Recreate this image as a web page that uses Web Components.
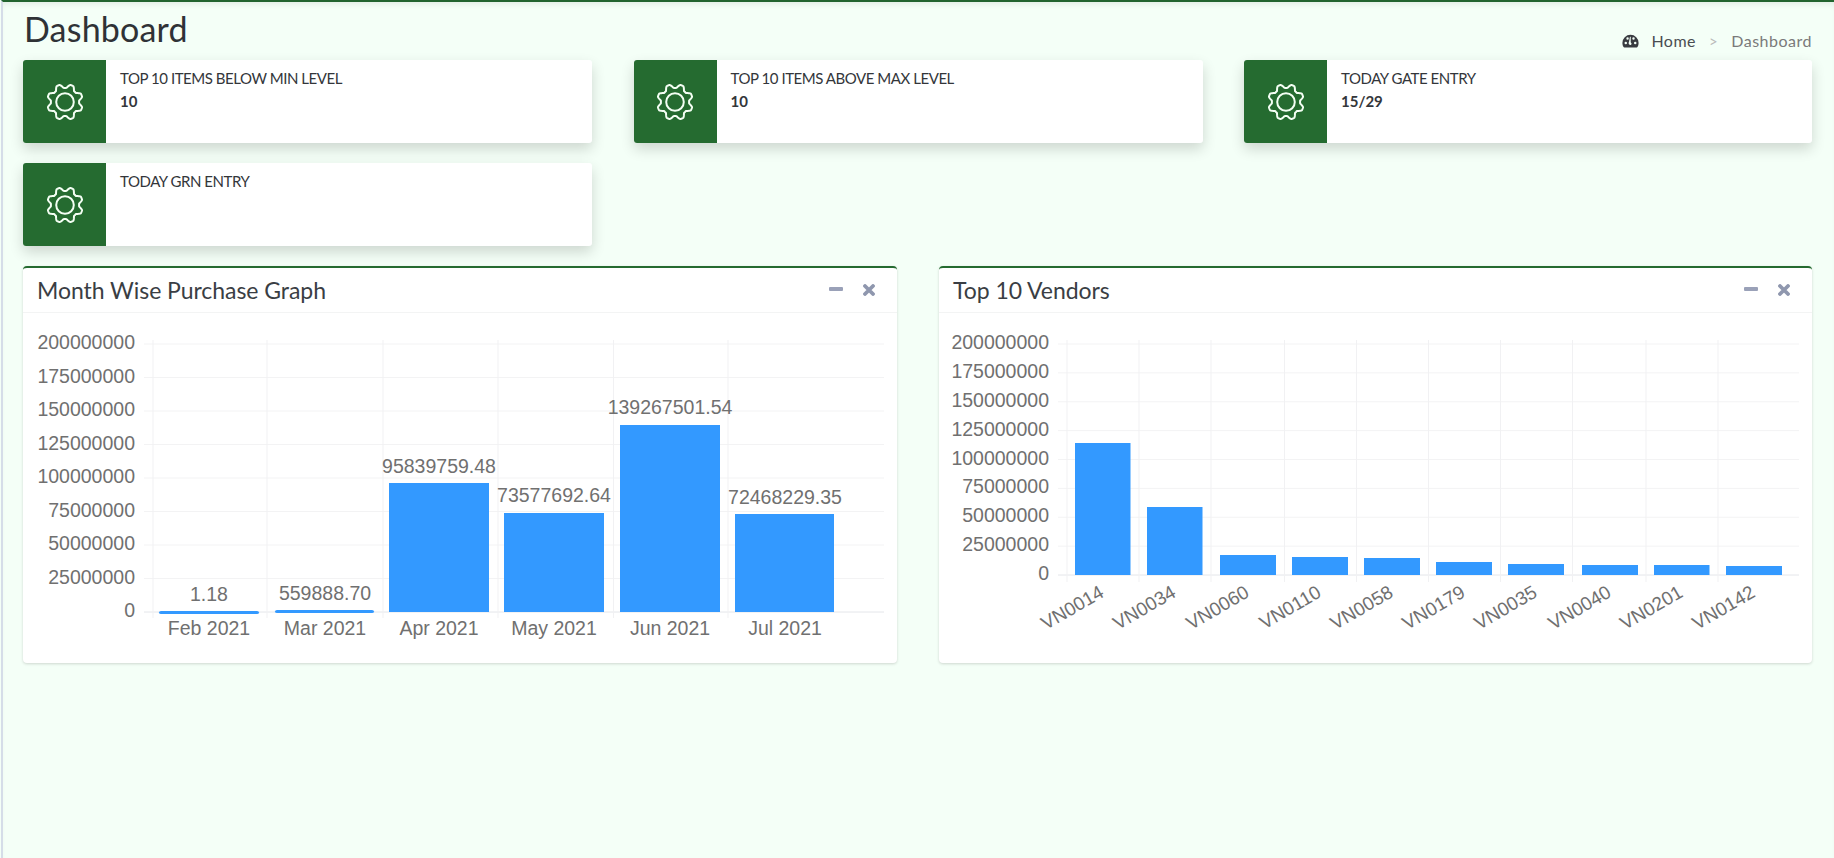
<!DOCTYPE html>
<html lang="en">
<head>
<meta charset="utf-8">
<title>Dashboard</title>
<style>
    html, body { margin: 0; height: 100%; overflow: hidden; }
    body { background: #f4fff7; font-family: "Lato", "Liberation Sans", sans-serif; }
</style>
</head>
<body>
<app-shell>
    <page-header slot="header" title="Dashboard"></page-header>
    <stat-card label="TOP 10 ITEMS BELOW MIN LEVEL" value="10"></stat-card>
    <stat-card label="TOP 10 ITEMS ABOVE MAX LEVEL" value="10"></stat-card>
    <stat-card label="TODAY GATE ENTRY" value="15/29"></stat-card>
    <stat-card label="TODAY GRN ENTRY"></stat-card>
    <chart-panel slot="panels" title="Month Wise Purchase Graph"><bar-chart config="month"></bar-chart></chart-panel>
    <chart-panel slot="panels" title="Top 10 Vendors"><bar-chart config="vendors"></bar-chart></chart-panel>
</app-shell>

<script>
// chart data, coordinates are in page pixels, the svg viewBox starts at the panel body
const CHARTS = {
    month: {
        left: 23, top: 313, width: 874, height: 350,
        labelRight: 135, tickStart: 144, axisX: 153, plotRight: 884,
        gridTop: 344, gridBottom: 612, gridEnd: 618, labelDrop: 5,
        vlines: [153, 267, 383, 498, 613.5, 728],
        bars: [
            { name: 'Feb 2021', x: 159, w: 100, top: 611, bottom: 614, r: 2, cx: 209, value: '1.18', vy: 601 },
            { name: 'Mar 2021', x: 275, w: 99, top: 610, bottom: 613, r: 2, cx: 325, value: '559888.70', vy: 600 },
            { name: 'Apr 2021', x: 389, w: 100, top: 483, cx: 439, value: '95839759.48', vy: 473 },
            { name: 'May 2021', x: 504, w: 100, top: 513, cx: 554, value: '73577692.64', vy: 502 },
            { name: 'Jun 2021', x: 620, w: 100, top: 425, cx: 670, value: '139267501.54', vy: 414 },
            { name: 'Jul 2021', x: 735, w: 99, top: 514, cx: 785, value: '72468229.35', vy: 504 }
        ]
    },
    vendors: {
        left: 939, top: 313, width: 873, height: 350,
        labelRight: 1049, tickStart: 1058, axisX: 1067, plotRight: 1799,
        gridTop: 344, gridBottom: 575, gridEnd: 582, labelDrop: 5,
        rotated: true,
        vlines: [1067, 1139, 1211, 1284.5, 1356.5, 1428.5, 1500.5, 1572.5, 1646, 1718],
        bars: [
            { name: 'VN0014', x: 1075, w: 55.5, top: 443 },
            { name: 'VN0034', x: 1147, w: 55.5, top: 507 },
            { name: 'VN0060', x: 1220, w: 56, top: 555 },
            { name: 'VN0110', x: 1292, w: 56, top: 557 },
            { name: 'VN0058', x: 1364, w: 56, top: 558 },
            { name: 'VN0179', x: 1436, w: 56, top: 562 },
            { name: 'VN0035', x: 1508, w: 56, top: 564 },
            { name: 'VN0040', x: 1582, w: 56, top: 565 },
            { name: 'VN0201', x: 1654, w: 55.5, top: 565 },
            { name: 'VN0142', x: 1726, w: 56, top: 566 }
        ]
    }
};
const TICKS = ['200000000', '175000000', '150000000', '125000000', '100000000', '75000000', '50000000', '25000000', '0'];

class AppShell extends HTMLElement {
    constructor() {
        super();
        this.attachShadow({ mode: 'open' });
    }

    connectedCallback() {
        this.shadowRoot.innerHTML = `
            <style>
                :host {
                    display: block;
                    box-sizing: border-box;
                    height: 858px;
                    margin-left: 1px;
                    border-left: 2px solid #d5dde8;
                    border-top: 2px solid #22642f;
                    box-shadow: inset 0 5px 6px -3px rgb(0 0 0 / 0.08);
                    padding: 0 22px 0 20px;
                }

                .cards {
                    display: grid;
                    grid-template-columns: 569px 569px 568px;
                    justify-content: space-between;
                    row-gap: 20px;
                    margin-bottom: 20px;
                }

                .panels {
                    display: grid;
                    grid-template-columns: 874px 873px;
                    justify-content: space-between;
                }
            </style>
            <slot name="header"></slot>
            <div class="cards"><slot></slot></div>
            <div class="panels"><slot name="panels"></slot></div>
        `;
    }
}

class PageHeader extends HTMLElement {
    constructor() {
        super();
        this.attachShadow({ mode: 'open' });
    }

    connectedCallback() {
        const title = this.getAttribute('title') || '';
        this.shadowRoot.innerHTML = `
            <style>
                :host {
                    display: flex;
                    justify-content: space-between;
                    height: 58px;
                }

                h1 {
                    margin: 9px 0 0 1px;
                    font: 400 34px/36px "Lato", sans-serif;
                    color: #2f3236;
                    letter-spacing: 0.2px;
                }

                nav {
                    display: flex;
                    align-items: center;
                    height: 20px;
                    margin-top: 29px;
                    font: 400 16px/20px "Lato", sans-serif;
                    letter-spacing: 0.5px;
                }

                svg { width: 17px; height: 14px; margin-right: 12px; }
                .home { color: #4a4d52; }
                .sep { color: #bbb; margin: 0 13px; font-size: 15px; }
                .here { color: #7a7a7a; }
            </style>
            <h1>${title}</h1>
            <nav>
                <svg viewBox="0 0 18 14" fill="#383b40">
                    <path d="M9 0.5A8.6 8.6 0 0 0 .4 9.1c0 1.6.4 3 1.2 4.3.2.3.5.4.8.4h13.200c.3 0 .6-.1.8-.4.8-1.300 1.200-2.700 1.200-4.300A8.600 8.600 0 0 0 9 .5zM4 10.500a1.300 1.300 0 1 1 0-2.600 1.300 1.300 0 0 1 0 2.600zM5.900 5.600a1.300 1.300 0 1 1 0-2.600 1.300 1.300 0 0 1 0 2.600zM9.700 10.900a1.900 1.900 0 0 1-2.300-2.900l1-5.200c.1-.4.900-.3.900.1l-.1 5.300a1.900 1.900 0 0 1 .5 2.700zM12.200 5.600a1.300 1.300 0 1 1 0-2.600 1.300 1.300 0 0 1 0 2.600zM14 10.500a1.300 1.300 0 1 1 0-2.600 1.300 1.300 0 0 1 0 2.600z" fill-rule="evenodd"/>
                </svg>
                <span class="home">Home</span>
                <span class="sep">&gt;</span>
                <span class="here">${title}</span>
            </nav>
        `;
    }
}

class GearIcon extends HTMLElement {
    constructor() {
        super();
        this.attachShadow({ mode: 'open' });
    }

    connectedCallback() {
        // 8 rounded teeth, sampled around the circle
        const pts = [];
        for (let i = 0; i < 240; i++) {
            const a = i / 240 * Math.PI * 2;
            const wave = Math.cos(a * 8 + Math.PI);
            const r = 16 + 1.9 * Math.max(-1, Math.min(1, wave * 1.35));
            pts.push((20 + r * Math.sin(a)).toFixed(2) + ' ' + (20 - r * Math.cos(a)).toFixed(2));
        }
        this.shadowRoot.innerHTML = `
            <style>
                :host { display: block; width: 40px; height: 40px; }
                svg { display: block; }
            </style>
            <svg width="40" height="40" viewBox="0 0 40 40" fill="none" stroke="#f4fff4" stroke-width="2">
                <path d="M${pts.join('L')}Z" stroke-linejoin="round"/>
                <circle cx="20" cy="20" r="8.8"/>
            </svg>
        `;
    }
}

class StatCard extends HTMLElement {
    constructor() {
        super();
        this.attachShadow({ mode: 'open' });
    }

    connectedCallback() {
        const label = this.getAttribute('label') || '';
        const value = this.getAttribute('value') || '';
        this.shadowRoot.innerHTML = `
            <style>
                :host {
                    display: flex;
                    height: 83px;
                    background: #fff;
                    border-radius: 3px;
                    overflow: visible;
                    box-shadow: 0 6px 14px rgb(0 0 0 / 0.16);
                }

                .icon {
                    flex: 0 0 83px;
                    display: flex;
                    align-items: center;
                    justify-content: center;
                    background: #256b30;
                    border-radius: 3px 0 0 3px;
                }

                .body {
                    padding: 9px 14px;
                    color: #33363a;
                    font-family: "Lato", sans-serif;
                }

                .label { font-size: 15px; line-height: 18px; letter-spacing: -0.45px; }
                .value { font-size: 15px; line-height: 18px; font-weight: 700; margin-top: 5px; }
            </style>
            <div class="icon"><gear-icon></gear-icon></div>
            <div class="body">
                <div class="label">${label}</div>
                <div class="value">${value}</div>
            </div>
        `;
    }
}

class ChartPanel extends HTMLElement {
    constructor() {
        super();
        this.attachShadow({ mode: 'open' });
    }

    connectedCallback() {
        const title = this.getAttribute('title') || '';
        this.shadowRoot.innerHTML = `
            <style>
                :host {
                    display: block;
                    background: #fff;
                    border-top: 2px solid #256b30;
                    border-radius: 4px;
                    box-shadow: 0 1px 3px rgb(0 0 0 / 0.16);
                }

                header {
                    display: flex;
                    align-items: center;
                    justify-content: space-between;
                    height: 44px;
                    padding: 0 22px 0 14px;
                    border-bottom: 1px solid #f3f4f4;
                }

                h2 {
                    margin: 0;
                    font: 400 23px/28px "Lato", sans-serif;
                    color: #3a3e44;
                    letter-spacing: -0.05px;
                }

                .tools { display: flex; align-items: center; gap: 20px; }
                svg { display: block; }
            </style>
            <header>
                <h2>${title}</h2>
                <div class="tools">
                    <svg width="14" height="12" viewBox="0 0 14 12"><rect y="3" width="14" height="4" rx="1" fill="#9aa1b8"/></svg>
                    <svg width="12" height="12" viewBox="0 0 12 12" stroke="#8f97ae" stroke-width="3.8" stroke-linecap="round"><path d="M2 2 10 10M10 2 2 10"/></svg>
                </div>
            </header>
            <slot></slot>
        `;
    }
}

class BarChart extends HTMLElement {
    constructor() {
        super();
        this.attachShadow({ mode: 'open' });
    }

    connectedCallback() {
        const c = CHARTS[this.getAttribute('config')];
        const step = (c.gridBottom - c.gridTop) / (TICKS.length - 1);
        let out = '';

        // grid
        TICKS.forEach((t, i) => {
            const y = c.gridTop + i * step;
            const stroke = i === TICKS.length - 1 ? '#e4e6ea' : '#f3f3f4';
            out += `<line x1="${c.tickStart}" x2="${c.plotRight}" y1="${y}" y2="${y}" stroke="${stroke}"/>`;
            out += `<text x="${c.labelRight}" y="${y + c.labelDrop}" text-anchor="end">${t}</text>`;
        });
        c.vlines.forEach((x) => {
            out += `<line x1="${x}" x2="${x}" y1="${c.gridTop - 4}" y2="${c.gridEnd}" stroke="#f1f1f3"/>`;
        });

        // bars and labels
        c.bars.forEach((b) => {
            const bottom = b.bottom || c.gridBottom;
            const cx = b.cx || b.x + b.w / 2;
            out += `<rect x="${b.x}" y="${b.top}" width="${b.w}" height="${bottom - b.top}" rx="${b.r || 0}" fill="#3399ff"/>`;
            if (b.value) {
                out += `<text x="${cx}" y="${b.vy}" text-anchor="middle">${b.value}</text>`;
            }
            if (c.rotated) {
                out += `<text class="slant" text-anchor="end" transform="translate(${cx + 2.5} 596) rotate(-30)">${b.name}</text>`;
            } else {
                out += `<text x="${cx}" y="635" text-anchor="middle">${b.name}</text>`;
            }
        });

        this.shadowRoot.innerHTML = `
            <style>
                :host { display: block; }
                svg { display: block; }
                text { font: 19.5px "Liberation Sans", Arial, sans-serif; fill: #707070; }
                .slant { font-size: 19px; }
            </style>
            <svg width="${c.width}" height="${c.height}" viewBox="${c.left} ${c.top} ${c.width} ${c.height}">${out}</svg>
        `;
    }
}

customElements.define('app-shell', AppShell);
customElements.define('page-header', PageHeader);
customElements.define('gear-icon', GearIcon);
customElements.define('stat-card', StatCard);
customElements.define('chart-panel', ChartPanel);
customElements.define('bar-chart', BarChart);
</script>
</body>
</html>
